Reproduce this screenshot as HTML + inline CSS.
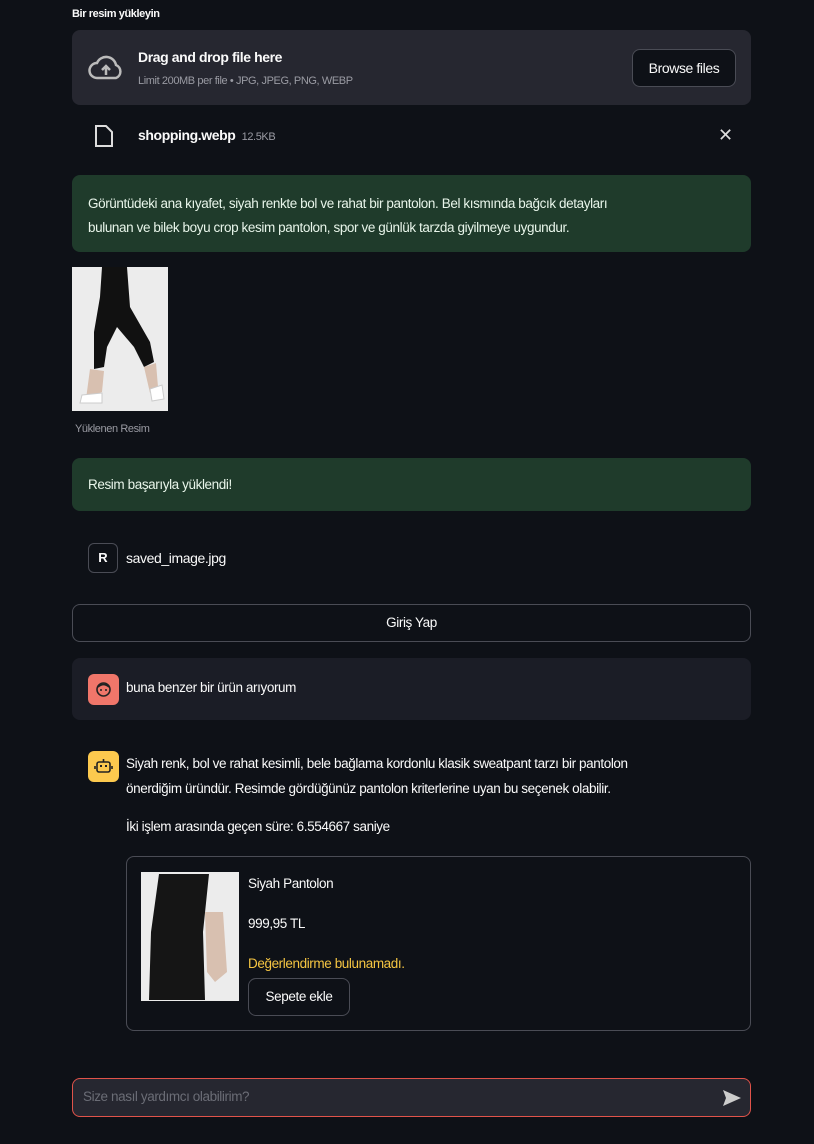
<!DOCTYPE html>
<html><head><meta charset="utf-8"><style>
*{box-sizing:border-box;margin:0;padding:0}
body{width:814px;height:1144px;background:#0e1117;color:#fafafa;font-family:"Liberation Sans",sans-serif;font-size:14px;position:relative;overflow:hidden}
.a{position:absolute}
.t{letter-spacing:-0.4px;white-space:nowrap}
</style></head><body>
<div class="a t" style="left:72px;top:8px;font-size:11px;font-weight:bold">Bir resim yükleyin</div>
<div class="a" style="left:72px;top:30px;width:679px;height:75px;background:#262730;border-radius:8px"></div>
<svg class="a" style="left:87px;top:55px" width="38" height="26" viewBox="0 0 38 26"><path d="M10 23 H29 A7 7 0 0 0 29 10 A10 10 0 0 0 10 8 A7.5 7.5 0 0 0 10 23 Z" fill="none" stroke="#bbb" stroke-width="2.5"/><path d="M19 20 V12 M15 15 L19 11 L23 15" stroke="#bbb" stroke-width="2.5" fill="none"/></svg>
<div class="a t" style="left:138px;top:49px;font-size:14px;font-weight:bold">Drag and drop file here</div>
<div class="a t" style="left:138px;top:75px;font-size:11px;color:#9a9ba3">Limit 200MB per file • JPG, JPEG, PNG, WEBP</div>
<div class="a t" style="left:632px;top:49px;width:104px;height:38px;border:1px solid #4a4c55;border-radius:8px;background:#0e1117;text-align:center;line-height:36px;font-size:14px">Browse files</div>
<svg class="a" style="left:94px;top:124px" width="20" height="24"><path d="M2 2 H12 L18 8 V22 H2 Z" fill="none" stroke="#ddd" stroke-width="2"/></svg>
<div class="a t" style="left:138px;top:127px;font-weight:bold">shopping.webp <span style="font-size:11px;color:#9a9ba3;font-weight:normal">&nbsp;12.5KB</span></div>
<div class="a" style="left:718px;top:125px;font-size:18px;color:#ddd">✕</div>
<div class="a t" style="left:72px;top:175px;width:679px;height:77px;background:#1f3b2b;border-radius:8px;padding:17px 16px;line-height:24px;font-size:13.5px;color:#e8f5ea">Görüntüdeki ana kıyafet, siyah renkte bol ve rahat bir pantolon. Bel kısmında bağcık detayları<br>bulunan ve bilek boyu crop kesim pantolon, spor ve günlük tarzda giyilmeye uygundur.</div>
<div class="a" style="left:72px;top:267px;width:96px;height:144px;background:#ececec"></div>
<svg class="a" style="left:72px;top:267px" width="96" height="144"><path d="M30 0 L55 0 L58 40 L78 75 L82 95 L72 100 L62 80 L45 60 L35 80 L32 100 L22 102 L22 65 L28 30 Z" fill="#111"/><path d="M18 102 L32 104 L30 125 L14 132 Z M72 100 L84 96 L86 120 L78 126 Z" fill="#d8c0b0"/><path d="M10 128 L30 126 L30 136 L8 136 Z M78 122 L90 118 L92 132 L80 134 Z" fill="#fff" stroke="#ccc"/></svg>
<div class="a t" style="left:75px;top:423px;font-size:11px;color:#9a9ba3">Yüklenen Resim</div>
<div class="a t" style="left:72px;top:458px;width:679px;height:53px;background:#1f3b2b;border-radius:8px;padding:0 16px;line-height:53px;font-size:13.5px;color:#e8f5ea">Resim başarıyla yüklendi!</div>
<div class="a" style="left:88px;top:543px;width:30px;height:30px;border:1px solid #4a4c55;border-radius:6px;text-align:center;line-height:28px;font-weight:bold;font-size:13px">R</div>
<div class="a t" style="left:126px;top:550px">saved_image.jpg</div>
<div class="a t" style="left:72px;top:604px;width:679px;height:38px;border:1px solid #4a4c55;border-radius:8px;text-align:center;line-height:36px;font-size:13.5px">Giriş Yap</div>
<div class="a" style="left:72px;top:658px;width:679px;height:62px;background:#1b1d26;border-radius:8px"></div>
<div class="a" style="left:88px;top:674px;width:31px;height:31px;background:#f0766a;border-radius:6px"></div>
<svg class="a" style="left:95px;top:681px" width="17" height="17"><circle cx="8.5" cy="8.5" r="6.5" fill="none" stroke="#222" stroke-width="1.6"/><circle cx="6" cy="9" r="1" fill="#222"/><circle cx="11" cy="9" r="1" fill="#222"/><path d="M3 6 Q8.5 1 14 6" fill="none" stroke="#222" stroke-width="1.6"/></svg>
<div class="a t" style="left:126px;top:680px;font-size:13.5px">buna benzer bir ürün arıyorum</div>
<div class="a" style="left:88px;top:751px;width:31px;height:31px;background:#fcc94e;border-radius:6px"></div>
<svg class="a" style="left:94px;top:757px" width="19" height="19"><rect x="3" y="5" width="13" height="10" rx="2" fill="none" stroke="#222" stroke-width="1.6"/><rect x="6" y="8" width="2" height="2" fill="#222"/><rect x="11" y="8" width="2" height="2" fill="#222"/><path d="M9.5 5 V2 M1 9 V12 M18 9 V12" stroke="#222" stroke-width="1.6"/></svg>
<div class="a t" style="left:126px;top:751px;line-height:25px;font-size:13.5px">Siyah renk, bol ve rahat kesimli, bele bağlama kordonlu klasik sweatpant tarzı bir pantolon<br>önerdiğim üründür. Resimde gördüğünüz pantolon kriterlerine uyan bu seçenek olabilir.</div>
<div class="a t" style="left:126px;top:819px;font-size:13.5px">İki işlem arasında geçen süre: 6.554667 saniye</div>
<div class="a" style="left:126px;top:856px;width:625px;height:175px;border:1px solid #4a4c55;border-radius:8px"></div>
<div class="a" style="left:141px;top:872px;width:98px;height:129px;background:#ececec"></div>
<svg class="a" style="left:141px;top:872px" width="98" height="129"><path d="M18 2 L68 2 L62 60 L64 128 L8 128 L10 60 Z" fill="#151515"/><path d="M64 40 L82 40 L86 100 L74 110 L66 100 Z" fill="#d8c0b0"/></svg>
<div class="a t" style="left:248px;top:876px;font-size:13.5px">Siyah Pantolon</div>
<div class="a t" style="left:248px;top:916px;font-size:13.5px">999,95 TL</div>
<div class="a t" style="left:248px;top:956px;font-size:13.5px;color:#f5c542">Değerlendirme bulunamadı.</div>
<div class="a t" style="left:248px;top:978px;width:102px;height:38px;border:1px solid #4a4c55;border-radius:8px;text-align:center;line-height:36px;font-size:13.5px">Sepete ekle</div>
<div class="a" style="left:72px;top:1078px;width:679px;height:39px;border:1.5px solid #e0534a;border-radius:8px;background:#262730"></div>
<div class="a t" style="left:83px;top:1089px;font-size:13.5px;color:#6b6d76">Size nasıl yardımcı olabilirim?</div>
<svg class="a" style="left:722px;top:1089px" width="20" height="18"><path d="M1 1 L19 9 L1 17 L4 9 Z" fill="#ccc"/></svg>
</body></html>
